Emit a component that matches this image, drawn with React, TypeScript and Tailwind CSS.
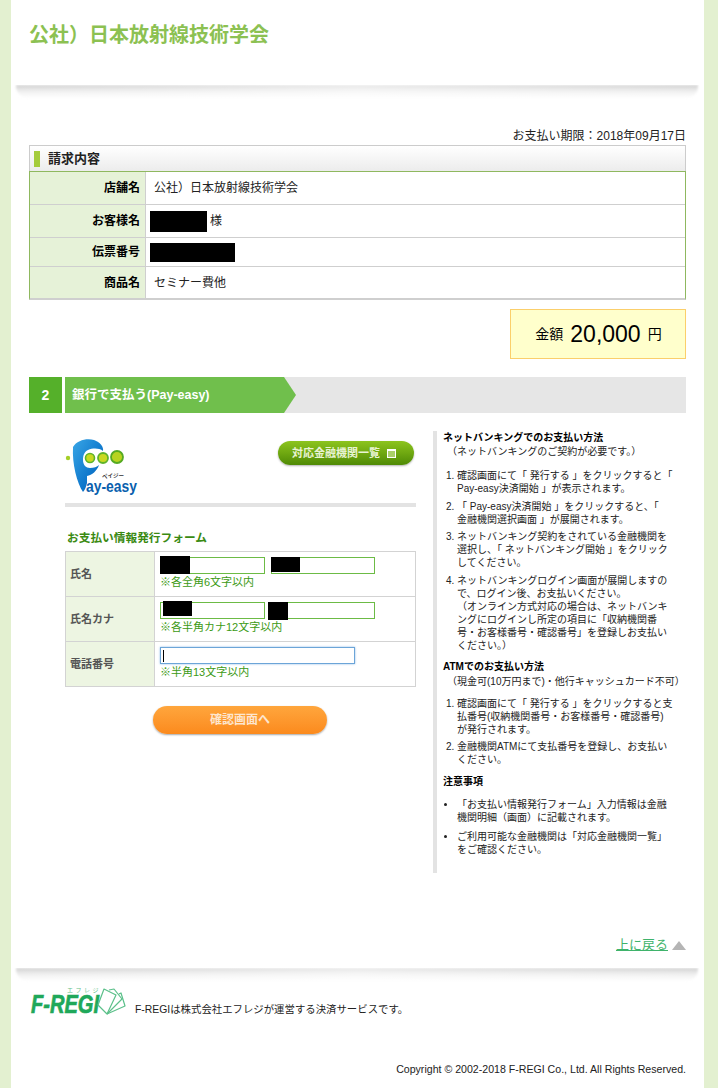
const font = { fontFamily: '"Liberation Sans", "Noto Sans CJK JP", sans-serif' };

function Shadow() {
  return (
    <div className="relative h-[16px] overflow-hidden">
      <div className="ml-[5px] mr-[6px] h-[13px] rounded-b-[12px] bg-gradient-to-b from-[#d2d2d2] via-[#f0f0f0] to-white blur-[1px]" />
      <div className="absolute inset-0 bg-gradient-to-r from-transparent via-white/50 to-transparent" />
    </div>
  );
}

function PayEasyLogo() {
  return (
    <svg width="76" height="60" viewBox="0 0 76 60" className="block overflow-visible">
      <defs>
        <linearGradient id="pblue" x1="0" y1="0" x2="1" y2="1">
          <stop offset="0" stopColor="#39a6e6" />
          <stop offset="0.6" stopColor="#0f78cc" />
          <stop offset="1" stopColor="#0a5cb0" />
        </linearGradient>
      </defs>
      <path
        d="M8 10 C12 3 22 1 29 3 C35 5 39 10 38 14 C34 11 28 11 23 13 C19 15 18 19 18 23 C18 28 21 31 25 31 C29 31 32 30 34 28 C32 34 27 38 22 39 L22 46 C21 50 20 53 18 55 C12 46 7 27 8 10 Z"
        fill="url(#pblue)"
      />
      <circle cx="3" cy="21" r="2.2" fill="#a5cf28" />
      <circle cx="25" cy="21" r="4.5" fill="#c9d921" stroke="#5fb32a" strokeWidth="1.6" />
      <circle cx="38" cy="21" r="5" fill="#c9d921" stroke="#5fb32a" strokeWidth="1.8" />
      <circle cx="52" cy="20" r="6" fill="#b7d320" stroke="#55aa22" strokeWidth="1.8" />
      <text x="37" y="41" fontSize="5.5" fontWeight="700" fill="#333" style={font}>ペイジー</text>
      <text x="21" y="55" fontSize="17" fontWeight="700" fill="#0a5fae" textLength="51" lengthAdjust="spacingAndGlyphs" style={font}>ay-easy</text>
    </svg>
  );
}

function FregiLogo() {
  return (
    <svg width="96" height="31" viewBox="0 0 96 31" className="block overflow-visible">
      <text x="37" y="6" fontSize="6" letterSpacing="2.5" fill="#5fc089" style={font}>エフレジ</text>
      <text x="1" y="27" fontSize="26" fontWeight="700" fontStyle="italic" fill="#1fa85a" stroke="#1fa85a" strokeWidth="0.7" textLength="68" lengthAdjust="spacingAndGlyphs" style={font}>F-REGI</text>
      <g fill="none" stroke="#5cc08a" strokeWidth="1.2" strokeLinejoin="round">
        <path d="M68 19 L74 3 L86 9 L77 28 Z" />
        <path d="M79 4 L84 3 L92 13 L77 28" />
        <path d="M89 8 L91 7 L95 20 L77 28" />
      </g>
    </svg>
  );
}

function InfoRow({ label, children, last }: { label: string; children: React.ReactNode; last?: boolean }) {
  return (
    <div className={`flex ${last ? "h-[31px]" : "h-[33px] border-b border-[#cfcfcf]"}`}>
      <div className="flex w-[116px] items-center justify-end border-r border-[#cfcfcf] bg-[#e6f2d8] pr-[5px] text-[12px] font-bold text-black">
        {label}
      </div>
      <div className="flex flex-1 items-center pl-[8px] text-[12px] text-[#222]">{children}</div>
    </div>
  );
}

function FormRow({ label, note, children, last }: { label: string; note: string; children: React.ReactNode; last?: boolean }) {
  return (
    <div className={`flex ${last ? "h-[44px]" : "h-[45px] border-b border-[#d3d3d3]"}`}>
      <div className="flex w-[89px] items-center border-r border-[#d3d3d3] bg-[#edf5e2] pl-[4px] text-[11px] font-bold text-[#555]">
        {label}
      </div>
      <div className="flex-1 pl-[5px] pt-[5px]">
        <div className="flex h-[17px]">{children}</div>
        <div className="mt-[1px] text-[11px] leading-[15px] text-[#3c9a14]">{note}</div>
      </div>
    </div>
  );
}

function NameInput({ width, gap, maskLeft, maskTop, maskW, maskH }: { width: number; gap: number; maskLeft: number; maskTop: number; maskW: number; maskH: number }) {
  return (
    <div className="relative h-[17px] border border-[#6cbb45] bg-white" style={{ width, marginRight: gap }}>
      <div className="absolute bg-black" style={{ left: maskLeft, top: maskTop, width: maskW, height: maskH }} />
    </div>
  );
}

export default function App() {
  return (
    <div className="min-h-[1088px] bg-[#e3f0d0] pl-[11px] pr-[14px] text-[#222]" style={font}>
      <div className="h-[1088px] overflow-hidden bg-white">
        <header className="h-[85px] px-[18px] pt-[22px]">
          <h1 className="text-[20px] font-bold leading-[26px] text-[#8cc152]">公社）日本放射線技術学会</h1>
        </header>
        <Shadow />

        <main className="px-[18px]">
          <div className="mt-[27px] text-right text-[12px] leading-[16px] text-[#222]">お支払い期限：2018年09月17日</div>

          <section className="mt-[1px]">
            <div className="flex h-[26px] items-center border border-b-0 border-[#cccccc] bg-gradient-to-b from-white to-[#ececec] pl-[4px]">
              <span className="h-[16px] w-[6px] bg-[#a5cc3c]" />
              <h2 className="ml-[8px] text-[13px] font-bold text-[#222]">請求内容</h2>
            </div>
            <div className="border-x border-t border-[#8fb85f] border-b-2 border-b-[#cfcfcf]">
              <InfoRow label="店舗名">公社）日本放射線技術学会</InfoRow>
              <InfoRow label="お客様名">
                <span className="-ml-[4px] mr-[3px] inline-block h-[21px] w-[57px] bg-black" />様
              </InfoRow>
              <div className="flex h-[29px] border-b border-[#cfcfcf]">
                <div className="flex w-[116px] items-center justify-end border-r border-[#cfcfcf] bg-[#e6f2d8] pr-[5px] text-[12px] font-bold text-black">
                  伝票番号
                </div>
                <div className="flex flex-1 items-center pl-[4px]">
                  <span className="inline-block h-[19px] w-[85px] bg-black" />
                </div>
              </div>
              <InfoRow label="商品名" last>セミナー費他</InfoRow>
            </div>
          </section>

          <div className="mt-[9px] flex justify-end">
            <div className="flex h-[50px] w-[176px] items-center justify-center border border-[#fbcf6b] bg-[#ffffcc] pl-[1px] text-black">
              <span className="text-[14px]">金額</span>
              <span className="mx-[7px] text-[23px] leading-none">20,000</span>
              <span className="text-[14px]">円</span>
            </div>
          </div>

          <div className="mt-[18px] flex h-[36px] bg-[#e6e6e6]">
            <div className="flex w-[33px] items-center justify-center bg-[#55b02a] text-[14px] font-bold text-white">2</div>
            <div className="w-[3px] bg-white" />
            <div className="flex w-[231px] items-center bg-[#70bf4c] pl-[7px] text-[12.5px] font-bold text-white [clip-path:polygon(0_0,219px_0,100%_50%,219px_100%,0_100%)]">
              銀行で支払う(Pay-easy)
            </div>
          </div>

          <div className="mt-[18px] flex">
            <div className="ml-[36px] w-[351px]">
              <div className="flex h-[76px] items-start justify-between border-b-[4px] border-[#e3e3e3]">
                <div className="mt-[6px]"><PayEasyLogo /></div>
                <button className="mr-[2px] mt-[10px] flex h-[24px] w-[136px] items-center rounded-full bg-gradient-to-b from-[#8cc41e] via-[#6fa811] to-[#4f8a06] pl-[14px] text-[11px] font-bold text-[#e8f3d2] shadow-[0_1px_2px_rgba(0,0,0,0.3)]">
                  対応金融機関一覧
                  <span className="relative ml-[7px] inline-block h-[9px] w-[9px] border border-white bg-[#a9cf6a]">
                    <span className="absolute -left-[1px] -top-[1px] h-[2px] w-[9px] bg-white" />
                  </span>
                </button>
              </div>

              <h3 className="ml-[2px] mt-[23px] text-[11.7px] font-bold leading-[16px] text-[#3a8a12]">お支払い情報発行フォーム</h3>
              <div className="mt-[5px] border border-[#d3d3d3]">
                <FormRow label="氏名" note="※各全角6文字以内">
                  <NameInput width={105} gap={6} maskLeft={-1} maskTop={-2} maskW={30} maskH={18} />
                  <NameInput width={104} gap={0} maskLeft={-1} maskTop={-1} maskW={29} maskH={15} />
                </FormRow>
                <FormRow label="氏名カナ" note="※各半角カナ12文字以内">
                  <NameInput width={105} gap={6} maskLeft={2} maskTop={-2} maskW={29} maskH={15} />
                  <NameInput width={104} gap={0} maskLeft={-4} maskTop={-1} maskW={20} maskH={18} />
                </FormRow>
                <FormRow label="電話番号" note="※半角13文字以内" last>
                  <div className="flex h-[17px] w-[195px] items-center border border-[#6ca5d8] bg-white pl-[2px] shadow-[0_0_2px_#8fbce6]">
                    <span className="h-[12px] w-px bg-black" />
                  </div>
                </FormRow>
              </div>

              <div className="mt-[19px] flex justify-center">
                <button className="-ml-[1px] h-[28px] w-[174px] rounded-full bg-gradient-to-b from-[#ffa63c] to-[#fb8a1c] text-[12px] font-bold text-[#fde6cf] shadow-[0_1px_2px_rgba(0,0,0,0.35)]">
                  確認画面へ
                </button>
              </div>
            </div>

            <aside className="ml-[17px] h-[442px] w-[250px] whitespace-nowrap border-l-[4px] border-[#e3e3e3] pl-[6px] text-[10px] leading-[13px] text-[#222]">
              <h4 className="font-bold text-black">ネットバンキングでのお支払い方法</h4>
              <p className="mt-[1px] pl-[4px]">（ネットバンキングのご契約が必要です。）</p>
              <ol className="mt-[11px] list-decimal pl-[14px] [&>li]:mb-[4.5px]">
                <li>確認画面にて「 発行する 」をクリックすると「<br />Pay-easy決済開始 」が表示されます。</li>
                <li>「 Pay-easy決済開始 」をクリックすると、「<br />金融機関選択画面 」が展開されます。</li>
                <li>ネットバンキング契約をされている金融機関を<br />選択し、「 ネットバンキング開始 」をクリック<br />してください。</li>
                <li>ネットバンキングログイン画面が展開しますの<br />で、ログイン後、お支払いください。<br />（オンライン方式対応の場合は、ネットバンキ<br />ングにログインし所定の項目に「収納機関番<br />号・お客様番号・確認番号」を登録しお支払い<br />ください。）</li>
              </ol>
              <h4 className="mt-[8px] font-bold text-black">ATMでのお支払い方法</h4>
              <p className="mt-[2px] pl-[4px]">（現金可(10万円まで)・他行キャッシュカード不可）</p>
              <ol className="mt-[9px] list-decimal pl-[14px] [&>li]:mb-[4.5px]">
                <li>確認画面にて「 発行する 」をクリックすると支<br />払番号(収納機関番号・お客様番号・確認番号)<br />が発行されます。</li>
                <li>金融機関ATMにて支払番号を登録し、お支払い<br />ください。</li>
              </ol>
              <h4 className="mt-[8.5px] font-bold text-black">注意事項</h4>
              <ul className="mt-[10.5px] list-disc pl-[14px] [&>li]:mb-[6px]">
                <li>「お支払い情報発行フォーム」入力情報は金融<br />機関明細（画面）に記載されます。</li>
                <li>ご利用可能な金融機関は「対応金融機関一覧」<br />をご確認ください。</li>
              </ul>
            </aside>
          </div>

          <div className="mt-[63px] flex items-center justify-end">
            <a className="text-[13px] leading-[18px] text-[#3fb36b] underline">上に戻る</a>
            <span className="ml-[4px] h-0 w-0 border-x-[7px] border-b-[9px] border-x-transparent border-b-[#b5b5b5]" />
          </div>
        </main>

        <div className="mt-[14px]"><Shadow /></div>

        <footer className="px-[18px]">
          <div className="mt-[2px] flex items-end pl-px">
            <FregiLogo />
            <p className="ml-[9px] text-[10.4px] leading-[14px] text-[#222]">F-REGIは株式会社エフレジが運営する決済サービスです。</p>
          </div>
          <p className="mt-[45px] text-right text-[10.6px] leading-[14px] text-[#222]">Copyright © 2002-2018 F-REGI Co., Ltd. All Rights Reserved.</p>
        </footer>
      </div>
    </div>
  );
}
